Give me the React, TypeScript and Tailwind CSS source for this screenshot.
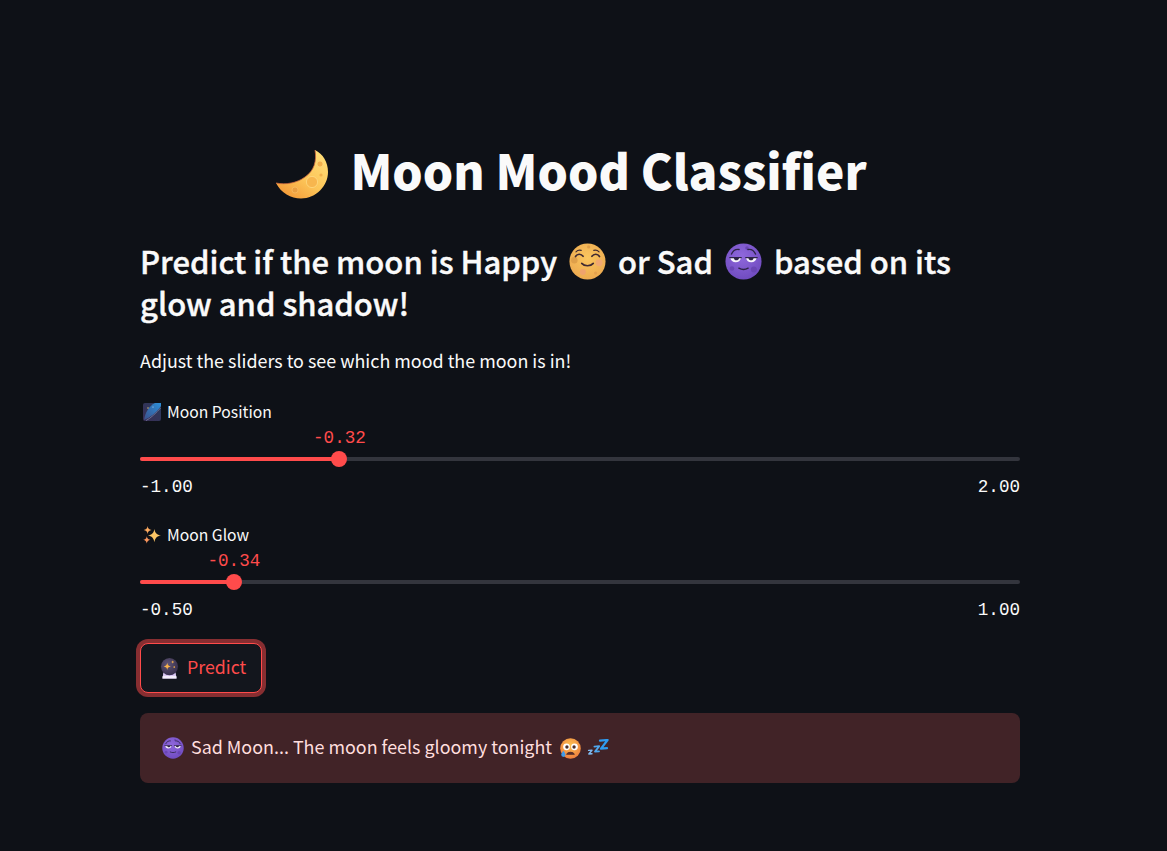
import { ReactNode } from "react";

const CrescentMoon = ({ className }: { className: string }) => (
    <svg viewBox="0 0 54 50" className={className}>
        <defs>
            <linearGradient id="moonFill" x1="0.85" y1="0.1" x2="0.2" y2="0.95">
                <stop offset="0" stopColor="#ffdb74" />
                <stop offset="0.55" stopColor="#fcc558" />
                <stop offset="1" stopColor="#f49c3a" />
            </linearGradient>
        </defs>
        <path d="M40 1C42 12 39 22 30 28 22 34 11 36 1 34 6 44 16 49.5 26 49.5 41 49.5 53 37 53 23 53 13 48 5 40 1Z" fill="url(#moonFill)" />
        <path d="M40 1C42 12 39 22 30 28 22 34 11 36 1 34" fill="none" stroke="#c9663f" strokeWidth="0.8" />
        <circle cx="37" cy="33" r="5.6" fill="#f7b64e" stroke="#ffdd88" strokeWidth="0.7" />
        <circle cx="45" cy="15" r="3" fill="#f2b04c" stroke="#ffdd88" strokeWidth="0.6" />
        <circle cx="46" cy="26" r="1.6" fill="#f2b04c" />
        <circle cx="20" cy="41" r="3" fill="#ea9f42" stroke="#fbc56c" strokeWidth="0.6" />
    </svg>
);

const HappyMoon = ({ className }: { className: string }) => (
    <svg viewBox="0 0 32 32" className={className}>
        <defs>
            <radialGradient id="happyFill" cx="0.5" cy="0.4" r="0.7">
                <stop offset="0" stopColor="#fbc65f" />
                <stop offset="1" stopColor="#eaa64e" />
            </radialGradient>
        </defs>
        <circle cx="16" cy="16" r="15.6" fill="url(#happyFill)" />
        <circle cx="4.6" cy="15" r="2.8" fill="#dfa04a" />
        <circle cx="17" cy="3.4" r="1.4" fill="#dfa04a" />
        <circle cx="26" cy="17" r="3" fill="#f1a870" />
        <circle cx="12" cy="25" r="2.6" fill="#efa36c" />
        <circle cx="23" cy="26" r="1.4" fill="#e2a04e" />
        <path d="M5.6 11.8C7 9 10.6 9 12.2 11.6M19.8 11.6C21.4 9 25 9 26.4 11.8M11 17.6C13.4 20.4 18.6 20.4 21 17.6" fill="none" stroke="#402a32" strokeWidth="1.4" strokeLinecap="round" />
        <path d="M6 7.6C7.2 6.4 9 6 10.6 6.4M21.4 6.4C23 6 24.8 6.4 26 7.6" fill="none" stroke="#402a32" strokeWidth="1" strokeLinecap="round" />
    </svg>
);

const SadMoon = ({ id, className }: { id: string; className: string }) => (
    <svg viewBox="0 0 32 32" className={className}>
        <defs>
            <radialGradient id={id} cx="0.45" cy="0.35" r="0.75">
                <stop offset="0" stopColor="#8f68dc" />
                <stop offset="1" stopColor="#6c48bc" />
            </radialGradient>
        </defs>
        <circle cx="16" cy="16" r="15.6" fill={`url(#${id})`} />
        <circle cx="6" cy="22" r="2" fill="#6a46b4" />
        <circle cx="25" cy="23" r="2.6" fill="#6a46b4" />
        <circle cx="19" cy="4.4" r="1.5" fill="#6a46b4" />
        <path d="M4.6 12.8H13.8C13.4 15.6 11.6 16.6 9.2 16.6 6.8 16.6 5 15.4 4.6 12.8ZM18.2 12.8H27.4C27 15.4 25.2 16.6 22.8 16.6 20.4 16.6 18.6 15.6 18.2 12.8Z" fill="#f8f5fd" />
        <path d="M7.6 12.8H12.2C12 14.4 11 15 9.8 15 8.6 15 7.8 14.2 7.6 12.8ZM20.2 12.8H24.8C24.6 14.2 23.8 15 22.6 15 21.4 15 20.4 14.4 20.2 12.8Z" fill="#2e2447" />
        <path d="M4.2 12.6H14M18 12.6H27.8M12 21.8C14.2 23 17.8 23 20 21.8M5.6 9.6C6.8 6.8 9.6 5.2 12.2 5.6M19.8 5.6C22.4 5.2 25.2 6.8 26.4 9.6" fill="none" stroke="#2e2447" strokeWidth="1.2" strokeLinecap="round" />
    </svg>
);

const ShootingStar = ({ className }: { className: string }) => (
    <svg viewBox="0 0 18 18" className={className}>
        <defs>
            <linearGradient id="nightFill" x1="0" y1="1" x2="1" y2="0">
                <stop offset="0" stopColor="#3a2e55" />
                <stop offset="1" stopColor="#2a3a5c" />
            </linearGradient>
            <linearGradient id="cometFill" x1="0" y1="1" x2="1" y2="0">
                <stop offset="0" stopColor="#3c4f8a" />
                <stop offset="1" stopColor="#2c8fd8" />
            </linearGradient>
        </defs>
        <rect width="18" height="18" rx="2" fill="url(#nightFill)" />
        <path d="M1 17C2 10 6 3 12 0H18V3C14 9 8 14 1 17Z" fill="url(#cometFill)" />
        <path d="M3 17.6C8 15 13 10 17.6 5" fill="none" stroke="#6a6f96" strokeWidth="1" />
        <circle cx="5" cy="5" r="0.7" fill="#e8d27a" />
        <circle cx="10" cy="4" r="0.6" fill="#bfe2ff" />
    </svg>
);

const Sparkles = ({ className }: { className: string }) => (
    <svg viewBox="0 0 18 18" className={className}>
        <path d="M11.4 3C12.2 7.2 13.8 8.8 18 9.6 13.8 10.4 12.2 12 11.4 16.2 10.6 12 9 10.4 4.8 9.6 9 8.8 10.6 7.2 11.4 3Z" fill="#fbc565" />
        <path d="M4.6 0C5 2.6 6 3.6 8.6 4 6 4.4 5 5.4 4.6 8 4.2 5.4 3.2 4.4.6 4 3.2 3.6 4.2 2.6 4.6 0Z" fill="#fba95f" />
        <path d="M3.8 10.2C4.2 12.4 5.2 13.4 7.4 13.8 5.2 14.2 4.2 15.2 3.8 17.4 3.4 15.2 2.4 14.2.2 13.8 2.4 13.4 3.4 12.4 3.8 10.2Z" fill="#f9955d" />
    </svg>
);

const CrystalBall = ({ className }: { className: string }) => (
    <svg viewBox="0 0 20 22" className={className}>
        <defs>
            <radialGradient id="ballFill" cx="0.4" cy="0.35" r="0.7">
                <stop offset="0" stopColor="#5f5575" />
                <stop offset="1" stopColor="#352d4a" />
            </radialGradient>
        </defs>
        <path d="M3.6 15H16.4L17.4 21.6H2.6Z" fill="#d9c7f2" />
        <path d="M2.8 19H17.2L17.4 21.6H2.6Z" fill="#f4eefc" />
        <circle cx="10" cy="9" r="9" fill="url(#ballFill)" />
        <path d="M7.6 5C8 7.6 8.8 8.4 11.4 8.8 8.8 9.2 8 10 7.6 12.6 7.2 10 6.4 9.2 3.8 8.8 6.4 8.4 7.2 7.6 7.6 5Z" fill="#f9b34a" />
        <path d="M13.4 2.4C13.6 3.6 14 4 15.2 4.2 14 4.4 13.6 4.8 13.4 6 13.2 4.8 12.8 4.4 11.6 4.2 12.8 4 13.2 3.6 13.4 2.4Z" fill="#f9b34a" />
        <circle cx="15" cy="9.4" r="0.9" fill="#f9b34a" />
    </svg>
);

const CryingFace = ({ className }: { className: string }) => (
    <svg viewBox="0 0 20 20" className={className}>
        <defs>
            <radialGradient id="cryFill" cx="0.5" cy="0.35" r="0.7">
                <stop offset="0" stopColor="#fcc04f" />
                <stop offset="1" stopColor="#ee7a3c" />
            </radialGradient>
        </defs>
        <circle cx="10" cy="10" r="9.8" fill="url(#cryFill)" />
        <circle cx="6.2" cy="8.4" r="3.2" fill="#fff" />
        <circle cx="13.8" cy="8.4" r="3.2" fill="#fff" />
        <circle cx="6.6" cy="8.6" r="1.6" fill="#4b2f2a" />
        <circle cx="13.4" cy="8.6" r="1.6" fill="#4b2f2a" />
        <path d="M6.4 15.4C8 13 12 13 13.6 15.4Z" fill="#5a2f2a" stroke="#5a2f2a" strokeWidth="1" strokeLinejoin="round" />
        <path d="M3.2 12.2C4.6 14 5.2 15.2 5.2 16A2 2 0 0 1 1.2 16C1.2 15.2 1.8 14 3.2 12.2Z" fill="#3f9be8" />
    </svg>
);

const Zzz = ({ className }: { className: string }) => (
    <svg viewBox="0 0 22 16" className={className}>
        <path d="M13 1.6L20.6 1 14 9.6 20 9.2" fill="none" stroke="#2f9bf0" strokeWidth="2.2" strokeLinejoin="round" strokeLinecap="round" />
        <path d="M7.4 7.6L12.2 7.2 8 12.6 12 12.4" fill="none" stroke="#4fa8ee" strokeWidth="1.8" strokeLinejoin="round" strokeLinecap="round" />
        <path d="M1.6 11.4L5 11.2 1.8 15 5 14.8" fill="none" stroke="#7fbaf0" strokeWidth="1.4" strokeLinejoin="round" strokeLinecap="round" />
    </svg>
);

const Emoji = ({ children }: { children: ReactNode }) => (
    <span className="mx-[5px] inline-flex align-[-0.2em]">{children}</span>
);

type SliderProps = {
    label: string;
    icon: ReactNode;
    value: number;
    min: number;
    max: number;
};

const Slider = ({ label, icon, value, min, max }: SliderProps) => {
    const percent = ((value - min) / (max - min)) * 100;

    return (
        <div>
            <div className="flex h-[24px] items-center gap-[6px] pl-[3px] text-[15.7px] text-[#fafafa]">
                {icon}
                <span>{label}</span>
            </div>
            <div className="relative mt-[4px] h-[49px]">
                <div className="absolute top-[29px] h-[4px] w-full rounded-full bg-[#33353d]" />
                <div
                    className="absolute top-[29px] h-[4px] rounded-full bg-[#ff4b4b]"
                    style={{ width: `${percent}%` }}
                />
                <div
                    className="absolute top-[23px] h-[16px] w-[16px] -translate-x-1/2 rounded-full bg-[#ff4b4b]"
                    style={{ left: `${percent}%` }}
                />
                <div
                    className="absolute top-0 -translate-x-1/2 font-['Liberation_Mono',monospace] text-[17.6px] leading-[20px] text-[#ff4b4b]"
                    style={{ left: `${percent}%` }}
                >
                    {value.toFixed(2)}
                </div>
            </div>
            <div className="flex justify-between font-['Liberation_Mono',monospace] text-[17.6px] leading-[20px] text-[#fafafa]">
                <span>{min.toFixed(2)}</span>
                <span>{max.toFixed(2)}</span>
            </div>
        </div>
    );
};

const App = () => {
    return (
        <div className="min-h-[851px] bg-[#0e1117] pr-[7px] font-['Noto_Sans_CJK_SC','Noto_Sans',sans-serif] text-[#fafafa]">
            <div className="mx-auto w-[880px] pt-[139px]">
                <h1 className="flex h-[62px] items-center justify-center gap-[21px] pr-[18px] text-[47.8px] leading-[62px] font-extrabold">
                    <CrescentMoon className="mt-[7px] h-[50px] w-[54px]" />
                    <span>Moon Mood Classifier</span>
                </h1>

                <h2 className="mt-[39px] text-[31px] leading-[42px] font-medium [-webkit-text-stroke:0.4px_#fafafa]">
                    Predict if the moon is Happy <Emoji><HappyMoon className="h-[37px] w-[37px]" /></Emoji> or Sad{" "}
                    <Emoji><SadMoon id="sadMoonLarge" className="h-[37px] w-[37px]" /></Emoji> based on its glow and shadow!
                </h2>

                <p className="mt-[20px] text-[17.9px] leading-[32px]">
                    Adjust the sliders to see which mood the moon is in!
                </p>

                <div className="mt-[24px]">
                    <Slider
                        label="Moon Position"
                        icon={<ShootingStar className="h-[18px] w-[18px]" />}
                        value={-0.32}
                        min={-1}
                        max={2}
                    />
                </div>
                <div className="mt-[26px]">
                    <Slider
                        label="Moon Glow"
                        icon={<Sparkles className="h-[18px] w-[18px]" />}
                        value={-0.34}
                        min={-0.5}
                        max={1}
                    />
                </div>

                <button
                    type="button"
                    className="mt-[23px] flex h-[50px] items-center gap-[8px] rounded-[8px] border border-[#ff4b4b] bg-[#13161d] pr-[15px] pb-[3px] pl-[19px] text-[17.8px] text-[#ff4b4b] ring-[4px] ring-[#ff4b4b]/50"
                >
                    <CrystalBall className="mt-[3px] h-[21px] w-[19px]" />
                    <span>Predict</span>
                </button>

                <div className="mt-[20px] flex h-[70px] items-center rounded-[8px] bg-[#412327] px-[22px] pb-[3px] text-[17.9px] text-[#ffdede]">
                    <SadMoon id="sadMoonSmall" className="mt-[3px] mr-[7px] h-[22px] w-[22px]" />
                    <span>Sad Moon... The moon feels gloomy tonight</span>
                    <CryingFace className="mt-[3px] mr-[6px] ml-[8px] h-[21px] w-[21px]" />
                    <Zzz className="mt-[1px] h-[16px] w-[22px]" />
                </div>
            </div>
        </div>
    );
};

export default App;
